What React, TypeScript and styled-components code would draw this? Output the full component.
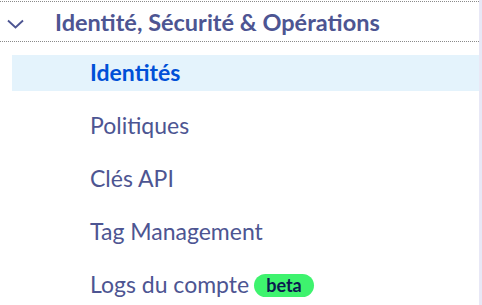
import styled, { createGlobalStyle } from "styled-components";

const Global = createGlobalStyle`
  html, body {
    margin: 0;
    padding: 0;
    background: #ffffff;
  }
  body {
    font-family: Lato, "Noto Sans", sans-serif;
  }
`;

const Panel = styled.nav`
  width: 479px;
  height: 305px;
  border-right: 3px solid #e8e8f6;
  overflow: hidden;
`;

const Header = styled.div`
  display: flex;
  align-items: center;
  height: 39px;
  margin-top: 1px;
  border-top: 1px dotted #8a8a8a;
  border-bottom: 1px dotted #8a8a8a;
  color: #4d5592;
`;

const Chevron = styled.span`
  display: flex;
  width: 55px;
  padding: 4px 0 0 7px;
  box-sizing: border-box;
`;

const Title = styled.span`
  font-size: 23.5px;
  font-weight: 700;
  white-space: nowrap;
`;

const List = styled.ul`
  list-style: none;
  margin: 0;
  padding: 13px 0 0 12px;
  display: flex;
  flex-direction: column;
  gap: 17px;
`;

const Item = styled.li<{ $active?: boolean }>`
  display: flex;
  align-items: center;
  gap: 5px;
  height: 36px;
  padding-left: 78px;
  font-size: 23px;
  line-height: 1;
  font-weight: ${(p) => (p.$active ? 700 : 400)};
  color: ${(p) => (p.$active ? "#0050d7" : "#4d5592")};
  background: ${(p) => (p.$active ? "#e4f3fc" : "transparent")};
  white-space: nowrap;
`;

const Label = styled.span`
  position: relative;
  top: -1px;
`;

const Badge = styled.span`
  display: inline-flex;
  align-items: center;
  height: 23px;
  padding: 0 12px;
  border-radius: 12px;
  background: #3ef36e;
  color: #0b1a4e;
  font-size: 18px;
  font-weight: 700;
`;

const items = ["Politiques", "Clés API", "Tag Management"];

export default function App() {
  return (
    <>
      <Global />
      <Panel>
        <Header>
          <Chevron>
            <svg width="17" height="10" viewBox="0 0 17 10">
              <polyline
                points="1,1.5 8.5,8.5 16,1.5"
                fill="none"
                stroke="#4d5592"
                strokeWidth="1.9"
              />
            </svg>
          </Chevron>
          <Title>Identité, Sécurité &amp; Opérations</Title>
        </Header>
        <List>
          <Item $active>
            <Label>Identités</Label>
          </Item>
          {items.map((label) => (
            <Item key={label}>
              <Label>{label}</Label>
            </Item>
          ))}
          <Item>
            <Label>Logs du compte</Label>
            <Badge>beta</Badge>
          </Item>
        </List>
      </Panel>
    </>
  );
}
